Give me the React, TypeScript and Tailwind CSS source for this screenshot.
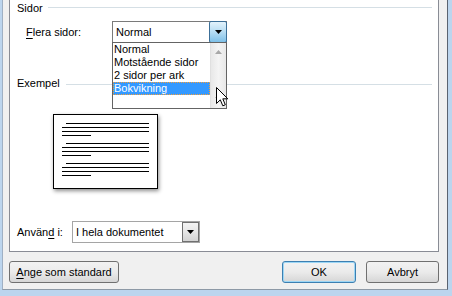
import React from "react";

const font = { fontFamily: '"Liberation Sans", Arial, sans-serif' };

function Cursor() {
  return (
    <svg width="13" height="21" viewBox="0 0 13 21" className="absolute left-[206px] top-[87px]">
      <path
        d="M0.5 0.5 L0.5 16.5 L4.3 12.8 L6.8 18.8 L9.3 17.8 L6.8 11.8 L11.8 11.8 Z"
        fill="#fff"
        stroke="#000"
        strokeWidth="1"
      />
    </svg>
  );
}

function Para() {
  return (
    <div className="flex flex-col gap-[3px]">
      <div className="h-px w-[83px] bg-black ml-[4px]" />
      <div className="h-px w-[87px] bg-black" />
      <div className="h-px w-[87px] bg-black" />
      <div className="h-px w-[29px] bg-black" />
    </div>
  );
}

const btnBase =
  "h-[22px] rounded-[3px] border bg-gradient-to-b from-[#f2f2f2] via-[#ebebeb] to-[#d6d6d6] text-[11px] leading-[16px] whitespace-nowrap text-black";

export default function App() {
  return (
    <div
      className="w-[452px] h-[296px] bg-[#bcd5ee] pl-[2px] pr-[4px] pb-[6px] text-[11px] text-black leading-[16px] overflow-hidden whitespace-nowrap"
      style={font}
    >
      <div className="h-[290px] bg-[#f0f0f0] border-l border-r border-b border-l-[#9fb0c4] border-r-[#5a6370] border-b-[#8d99a6] pl-[6px] pr-[8px] flex flex-col">
        {/* Panel */}
        <div className="relative w-[430px] h-[252px] bg-white border-l border-r border-b border-[#898c95] flex flex-col">
          {/* Sidor header */}
          <div className="flex items-start h-[16px] pl-[7px] pr-[6px]">
            <span>Sidor</span>
            <div className="flex-1 h-px bg-[#d5dfe5] mt-[7px] ml-[5px]" />
          </div>
          {/* Flera sidor row */}
          <div className="flex items-center mt-[5px] pl-[16px]">
            <span className="w-[86px]">
              <span className="underline underline-offset-2">F</span>lera sidor:
            </span>
            <div className="relative w-[115px] h-[22px] border border-[#7a7a7a] bg-white flex items-center pl-[3px]">
              <span>Normal</span>
              <div className="absolute right-[-1px] top-[-1px] w-[18px] h-[22px] border border-[#3c6f98] rounded-[2px] bg-gradient-to-b from-[#e3f3fc] via-[#b5dcf3] to-[#7ec0e8] flex items-center justify-center">
                <svg width="7" height="4" viewBox="0 0 7 4">
                  <path d="M0 0 H7 L3.5 4 Z" fill="#000" />
                </svg>
              </div>
            </div>
          </div>
          {/* Exempel header */}
          <div className="flex items-start h-[16px] mt-[32px] pl-[7px] pr-[6px]">
            <span>Exempel</span>
            <div className="flex-1 h-px bg-[#d5dfe5] mt-[9px] ml-[6px]" />
          </div>
          {/* Preview */}
          <div className="ml-[43px] mt-[23px] w-[105px] h-[75px] border border-black bg-white shadow-[1px_2px_4px_rgba(0,0,0,0.45)] pl-[8px] pt-[8px] flex flex-col gap-[7px]">
            <Para />
            <Para />
            <Para />
          </div>
          {/* Använd i row */}
          <div className="flex items-center mt-[32px] pl-[7px]">
            <span className="w-[55px]">
              Använ<span className="underline underline-offset-2">d</span> i:
            </span>
            <div className="relative w-[128px] h-[22px] border border-[#a5a5a5] bg-white flex items-center pl-[3px]">
              <span>I hela dokumentet</span>
              <div className="absolute right-0 top-0 w-[17px] h-[20px] border border-[#707070] bg-gradient-to-b from-[#f4f4f4] via-[#e6e6e6] to-[#d3d3d3] flex items-center justify-center">
                <svg width="7" height="4" viewBox="0 0 7 4">
                  <path d="M0 0 H7 L3.5 4 Z" fill="#000" />
                </svg>
              </div>
            </div>
          </div>

          {/* Dropdown list */}
          <div className="absolute left-[102px] top-[42px] w-[115px] h-[67px] border border-[#646464] bg-white flex">
            <div className="flex-1 flex flex-col leading-[13px]">
              <div className="h-[13px] pl-[1px]">Normal</div>
              <div className="h-[13px] pl-[1px]">Motstående sidor</div>
              <div className="h-[13px] pl-[1px]">2 sidor per ark</div>
              <div className="h-[13px] bg-[#3399ff] text-white border border-dotted border-[#f5a03a] leading-[11px]">
                Bokvikning
              </div>
            </div>
            <div className="w-[16px] h-full bg-gradient-to-r from-[#e8e8e8] via-[#f4f4f4] to-[#e8e8e8] border-l border-[#e0e0e0] flex flex-col items-center justify-between py-[7px]">
              <svg width="7" height="4" viewBox="0 0 7 4">
                <path d="M0 4 H7 L3.5 0 Z" fill="#a8a8a8" />
              </svg>
              <svg width="7" height="4" viewBox="0 0 7 4">
                <path d="M0 0 H7 L3.5 4 Z" fill="#a8a8a8" />
              </svg>
            </div>
          </div>
          <Cursor />
        </div>
        {/* Buttons */}
        <div className="w-[430px] mt-[9px] flex justify-between">
          <button className={`${btnBase} w-[110px] border-[#707070]`} style={font}>
            <span className="underline underline-offset-2">A</span>nge som standard
          </button>
          <div className="flex gap-[10px]">
            <button className={`${btnBase} w-[74px] border-[#3c7fb1] shadow-[inset_0_0_0_1px_#9cd6f5]`} style={font}>
              OK
            </button>
            <button className={`${btnBase} w-[73px] border-[#707070]`} style={font}>
              Avbryt
            </button>
          </div>
        </div>
      </div>
    </div>
  );
}
